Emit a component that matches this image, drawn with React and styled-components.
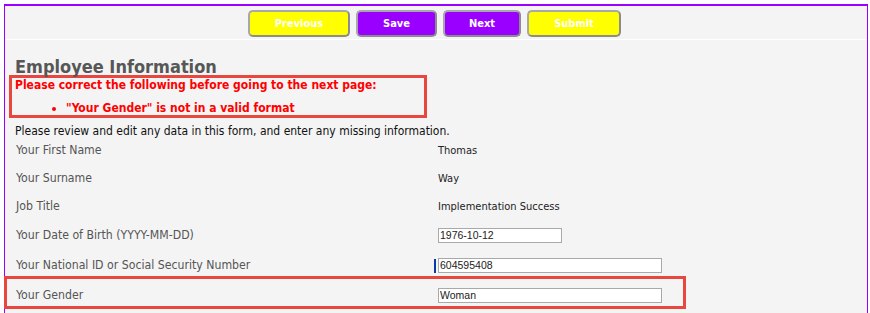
import React from 'react';
import styled, { createGlobalStyle } from 'styled-components';

const GlobalStyle = createGlobalStyle`
  body {
    margin: 0;
    background: #ffffff;
    font-family: "DejaVu Sans Condensed", "DejaVu Sans", sans-serif;
  }
`;

const Page = styled.div`
  padding: 4px 2px 0 4px;
`;

const Panel = styled.div`
  background: #f4f4f4;
  border-top: 2px solid #9900ff;
  border-left: 1px solid #9900ff;
  border-right: 1px solid #9900ff;
  min-height: 320px;
`;

const Toolbar = styled.div`
  display: flex;
  justify-content: center;
  gap: 6px;
  padding: 4px 3px 2px 0;
  border-bottom: 1px solid #ffffff;
`;

const NavButton = styled.button`
  width: ${(p) => p.width}px;
  height: 27px;
  border: 2px solid #a8a8a8;
  border-right-color: #8c8c8c;
  border-bottom-color: #8c8c8c;
  border-radius: 5px;
  background: ${(p) => (p.primary ? '#9900ff' : '#ffff00')};
  color: #ffffff;
  font-family: "DejaVu Sans Condensed", "DejaVu Sans", sans-serif;
  font-weight: bold;
  font-size: 11px;
  padding: 0;
  cursor: pointer;
`;

const Body = styled.div`
  padding: 0 10px;
`;

const Heading = styled.h2`
  margin: 16px 0 0;
  font-size: 18px;
  line-height: 22px;
  font-weight: bold;
  color: #575757;
`;

const ErrorBox = styled.div`
  box-sizing: border-box;
  width: 418px;
  margin: -3px 0 0 -6px;
  padding: 0 3px;
  border: 3px solid #e8473f;
  color: #ff0000;
  font-weight: bold;
  font-size: 12px;
  line-height: 14px;
`;

const ErrorList = styled.ul`
  margin: 9px 0 0;
  padding-left: 51px;
`;

const Intro = styled.p`
  margin: 6px 0 0;
  font-size: 12px;
  line-height: 14px;
  color: #111111;
`;

const Rows = styled.div`
  display: flex;
  flex-direction: column;
  margin-top: -2px;
`;

const Row = styled.div`
  display: grid;
  grid-template-columns: 422px 1fr;
  align-items: center;
  min-height: ${(p) => (p.input ? 30 : 28)}px;
  padding-left: 1px;
  position: relative;

  ${(p) =>
    p.flagged &&
    `
    &::after {
      content: '';
      position: absolute;
      left: -11px;
      top: -4px;
      width: 682px;
      height: 33px;
      box-sizing: border-box;
      border: 3px solid #e8473f;
      pointer-events: none;
    }
  `}
`;

const Label = styled.span`
  font-size: 12.2px;
  color: #555555;
`;

const Value = styled.span`
  font-size: 11px;
  color: #222222;
`;

const Field = styled.input`
  box-sizing: border-box;
  width: ${(p) => p.width}px;
  height: 15px;
  padding: 0 1px;
  border: 1px solid #a9a9a9;
  background: #ffffff;
  font-family: "Liberation Sans", Arial, sans-serif;
  font-size: 10.5px;
  color: #222222;
  outline: none;
`;

const FieldWrap = styled.div`
  position: relative;
  display: flex;
  align-items: center;

  ${(p) =>
    p.focused &&
    `
    &::before {
      content: '';
      position: absolute;
      left: -4px;
      top: 1px;
      width: 2px;
      height: 14px;
      background: #0a3aa8;
    }
  `}
`;

const buttons = [
  { label: 'Previous', width: 102 },
  { label: 'Save', width: 81, primary: true },
  { label: 'Next', width: 78, primary: true },
  { label: 'Submit', width: 94 },
];

const fields = [
  { label: 'Your First Name', value: 'Thomas' },
  { label: 'Your Surname', value: 'Way' },
  { label: 'Job Title', value: 'Implementation Success' },
  { label: 'Your Date of Birth (YYYY-MM-DD)', value: '1976-10-12', input: 124 },
  { label: 'Your National ID or Social Security Number', value: '604595408', input: 224, focused: true },
  { label: 'Your Gender', value: 'Woman', input: 224, flagged: true },
];

export default function App() {
  return (
    <Page>
      <GlobalStyle />
      <Panel>
        <Toolbar>
          {buttons.map((b) => (
            <NavButton key={b.label} width={b.width} primary={b.primary}>
              {b.label}
            </NavButton>
          ))}
        </Toolbar>
        <Body>
          <Heading>Employee Information</Heading>
          <ErrorBox>
            Please correct the following before going to the next page:
            <ErrorList>
              <li>"Your Gender" is not in a valid format</li>
            </ErrorList>
          </ErrorBox>
          <Intro>Please review and edit any data in this form, and enter any missing information.</Intro>
          <Rows>
            {fields.map((f) => (
              <Row key={f.label} input={!!f.input} flagged={f.flagged}>
                <Label>{f.label}</Label>
                {f.input ? (
                  <FieldWrap focused={f.focused}>
                    <Field width={f.input} defaultValue={f.value} />
                  </FieldWrap>
                ) : (
                  <Value>{f.value}</Value>
                )}
              </Row>
            ))}
          </Rows>
        </Body>
      </Panel>
    </Page>
  );
}
